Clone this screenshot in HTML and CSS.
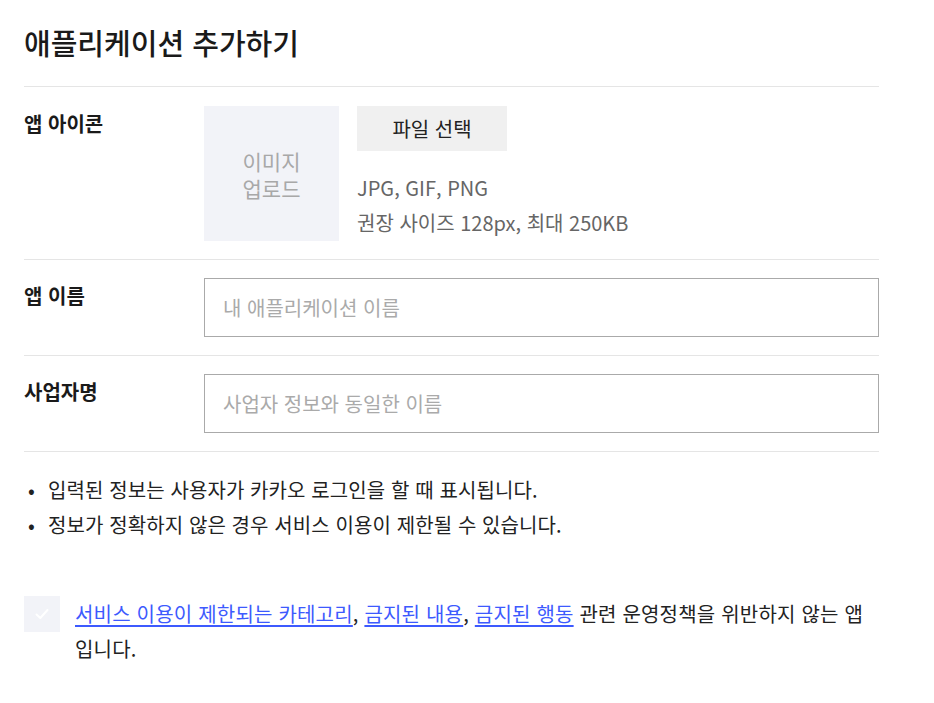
FILE: index.html
```html
<!DOCTYPE html>
<html lang="ko">
<head>
<meta charset="utf-8">
<title>애플리케이션 추가하기</title>
<link rel="stylesheet" href="styles.css">
</head>
<body>
<div class="page">
  <h1 class="title">애플리케이션 추가하기</h1>
  <div class="row">
    <div class="label">앱 아이콘</div>
    <div class="field icon-field">
      <div class="upload-box">이미지<br>업로드</div>
      <div class="upload-info">
        <button class="file-btn" type="button">파일 선택</button>
        <p class="hint">JPG, GIF, PNG<br>권장 사이즈 128px, 최대 250KB</p>
      </div>
    </div>
  </div>
  <div class="row">
    <div class="label">앱 이름</div>
    <div class="field"><input class="text-input" type="text" placeholder="내 애플리케이션 이름"></div>
  </div>
  <div class="row">
    <div class="label">사업자명</div>
    <div class="field"><input class="text-input" type="text" placeholder="사업자 정보와 동일한 이름"></div>
  </div>
  <ul class="notes">
    <li>입력된 정보는 사용자가 카카오 로그인을 할 때 표시됩니다.</li>
    <li>정보가 정확하지 않은 경우 서비스 이용이 제한될 수 있습니다.</li>
  </ul>
  <div class="agree">
    <span class="check">
      <svg width="16" height="16" viewBox="0 0 16 16"><path d="M2.5 8.5 L6.3 12 L13.5 4" fill="none" stroke="#fff" stroke-width="2" stroke-linecap="round" stroke-linejoin="round"/></svg>
    </span>
    <p class="agree-text"><a href="#">서비스 이용이 제한되는 카테고리</a>, <a href="#">금지된 내용</a>, <a href="#">금지된 행동</a> 관련 운영정책을 위반하지 않는 앱입니다.</p>
  </div>
</div>
</body>
</html>
```
FILE: styles.css
```css
* { box-sizing: border-box; }
body {
  margin: 0;
  background: #fff;
  color: #222;
  font-family: "Noto Sans CJK KR", "Noto Sans", sans-serif;
  font-size: 20px;
}
.page {
  width: 879px;
  padding: 21px 0 0 24px;
}
.title {
  margin: 0;
  font-size: 29px;
  font-weight: 500;
  line-height: 42px;
  padding-bottom: 23px;
  border-bottom: 1px solid #e5e5e5;
  color: #1a1a1a;
}
.row {
  display: flex;
  padding: 18px 0 18px;
  border-bottom: 1px solid #e5e5e5;
}
.row:first-of-type { padding-top: 19px; }
.label {
  width: 180px;
  flex: none;
  font-weight: 700;
  line-height: 35px;
  color: #1a1a1a;
}
.field { flex: 1; }
.icon-field { display: flex; gap: 18px; }
.upload-box {
  width: 135px;
  height: 135px;
  background: #f2f3f8;
  color: #a8a8a8;
  font-size: 21px;
  line-height: 27px;
  display: flex;
  align-items: center;
  justify-content: center;
  text-align: center;
  padding-top: 2px;
}
.upload-info { display: flex; flex-direction: column; align-items: flex-start; }
.file-btn {
  width: 150px;
  height: 45px;
  border: 0;
  background: #f0f0f0;
  font-family: inherit;
  font-size: 20px;
  color: #222;
  padding: 0;
}
.hint {
  margin: 19px 0 0;
  color: #666;
  line-height: 35px;
}
.text-input {
  display: block;
  width: 100%;
  height: 59px;
  border: 1px solid #aaa;
  padding: 0 18px;
  font-family: inherit;
  font-size: 20px;
  color: #222;
  outline: none;
}
.text-input::placeholder { color: #aaa; }
.notes {
  list-style: none;
  margin: 20px 0 0;
  padding: 0;
  line-height: 35px;
  letter-spacing: 0.1px;
}
.notes li { position: relative; padding-left: 24px; }
.notes li::before {
  content: "•";
  position: absolute;
  left: 4px;
  top: 0;
}
.agree {
  display: flex;
  gap: 15px;
  margin-top: 54px;
  align-items: flex-start;
}
.check {
  width: 36px;
  height: 36px;
  flex: none;
  background: #f2f3f8;
  display: flex;
  align-items: center;
  justify-content: center;
}
.agree-text {
  margin: 0;
  line-height: 35px;
  flex: 1;
  padding-right: 14px;
  word-break: break-all;
  letter-spacing: 0.2px;
}
.agree-text a { color: #3d5afe; text-decoration: underline; text-underline-offset: 3px; }
```
